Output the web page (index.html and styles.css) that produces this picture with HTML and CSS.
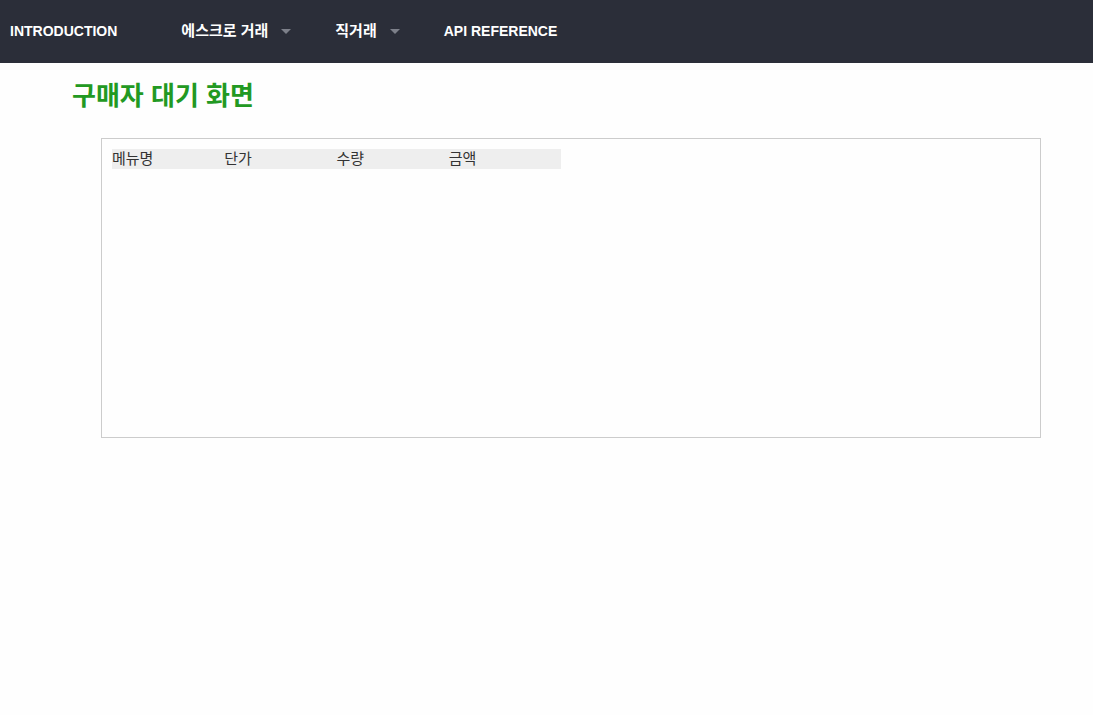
FILE: index.html
```
<!DOCTYPE html>
<html lang="ko">
<head>
<meta charset="utf-8">
<meta name="viewport" content="width=device-width, initial-scale=1">
<title>구매자 대기 화면</title>
<link rel="stylesheet" href="styles.css">
</head>
<body>
<nav class="topbar">
  <ul class="menu">
    <li class="menu-item menu-first"><a class="menu-link" href="#intro">INTRODUCTION</a></li>
    <li class="menu-item"><a class="menu-link menu-ko" href="#escrow">에스크로 거래<span class="caret"></span></a></li>
    <li class="menu-item"><a class="menu-link menu-ko" href="#direct">직거래<span class="caret"></span></a></li>
    <li class="menu-item"><a class="menu-link" href="#api">API REFERENCE</a></li>
  </ul>
</nav>
<main class="content">
  <h1 class="title">구매자 대기 화면</h1>
  <section class="panel">
    <table class="orders">
      <thead>
        <tr><th scope="col">메뉴명</th><th scope="col">단가</th><th scope="col">수량</th><th scope="col">금액</th></tr>
      </thead>
    </table>
  </section>
</main>
</body>
</html>
```
FILE: styles.css
```
* {
  box-sizing: border-box;
}

body {
  margin: 0;
  background: #fefefe;
  color: #333;
  font-family: "Liberation Sans", "Noto Sans CJK KR", sans-serif;
}

.topbar {
  padding: 20px 10px 21px;
  background: #2b2e39;
}

.menu {
  display: flex;
  align-items: center;
  gap: 44px;
  margin: 0;
  padding: 0;
  list-style: none;
}

.menu-first {
  margin-right: 20px;
}

.menu-link {
  display: flex;
  align-items: center;
  gap: 13px;
  color: #fff;
  font-size: 14px;
  font-weight: 700;
  line-height: 22px;
  text-decoration: none;
}

.menu-ko {
  font-size: 15px;
}

.caret {
  border: 5px solid transparent;
  border-top-color: #7d808a;
  border-bottom: 0;
}

.content {
  padding: 15px 52px 0 72px;
}

.title {
  margin: 0;
  color: #229922;
  font-size: 26px;
  font-weight: 700;
  line-height: 36px;
}

.panel {
  min-height: 300px;
  margin: 24px 0 0 29px;
  padding: 10px;
  border: 1px solid #ccc;
}

.orders {
  width: 449px;
  max-width: 100%;
  border-collapse: collapse;
  table-layout: fixed;
  background: #eee;
}

.orders th {
  padding: 0;
  font-size: 15px;
  font-weight: 400;
  line-height: 20px;
  text-align: left;
}
```
